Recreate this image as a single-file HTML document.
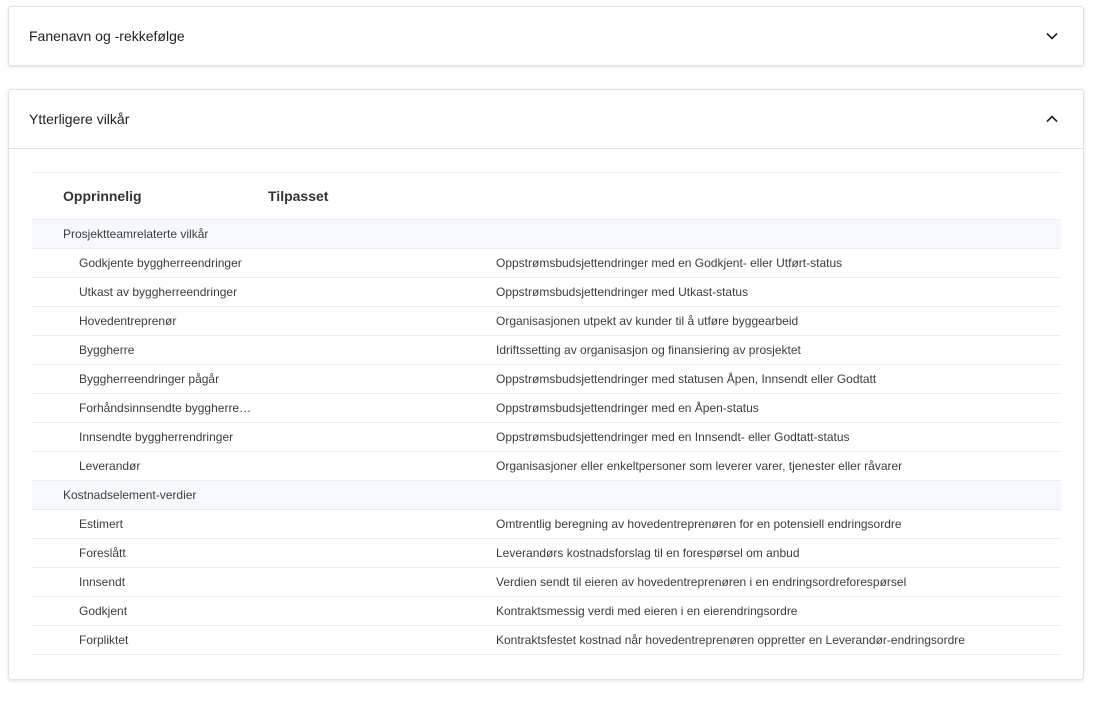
<!DOCTYPE html>
<html><head><meta charset="utf-8"><style>
*{box-sizing:border-box;margin:0;padding:0}
body{width:1093px;height:709px;background:#fff;font-family:"Liberation Sans",sans-serif;color:#3c3c3c;position:relative;overflow:hidden}
.card{position:absolute;left:8px;width:1076px;background:#fff;border:1px solid #e2e2e2;border-radius:3px;box-shadow:0 1px 3px rgba(0,0,0,.12)}
.hd{height:58px;display:flex;align-items:center;padding-left:20px;font-size:14px;color:#222;position:relative}
.chev{position:absolute;right:24px;top:24px}
table{position:absolute;left:23px;top:82px;width:1029px;border-collapse:collapse;font-size:12px}
td{height:29px;border-bottom:1px solid #ececec;vertical-align:middle;color:#3c3c3c}
tr.h td{height:47px;font-weight:bold;font-size:14px;color:#333;border-top:1px solid #ececec}
tr.g td{background:#f5f9fd}
</style></head><body>
<div class="card" style="top:6px;height:60px"><div class="hd">Fanenavn og -rekkefølge
<svg class="chev" width="14" height="10" viewBox="0 0 14 10"><path d="M2 2.5L7 7.5L12 2.5" fill="none" stroke="#222" stroke-width="1.6"/></svg></div></div>
<div class="card" style="top:89px;height:591px">
<div class="hd" style="height:59px;border-bottom:1px solid #e2e2e2">Ytterligere vilkår
<svg class="chev" width="14" height="10" viewBox="0 0 14 10"><path d="M2 7.5L7 2.5L12 7.5" fill="none" stroke="#222" stroke-width="1.6"/></svg></div>
<table>
<colgroup><col style="width:31px"><col style="width:433px"><col></colgroup>
<tr class="h"><td></td><td>Opprinnelig<span style="position:absolute;left:236px">Tilpasset</span></td><td></td></tr>
<tr class="g"><td colspan="3" style="padding-left:31px">Prosjektteamrelaterte vilkår</td></tr>
<tr><td></td><td style="padding-left:16px">Godkjente byggherreendringer</td><td>Oppstrømsbudsjettendringer med en Godkjent- eller Utført-status</td></tr>
<tr><td></td><td style="padding-left:16px">Utkast av byggherreendringer</td><td>Oppstrømsbudsjettendringer med Utkast-status</td></tr>
<tr><td></td><td style="padding-left:16px">Hovedentreprenør</td><td>Organisasjonen utpekt av kunder til å utføre byggearbeid</td></tr>
<tr><td></td><td style="padding-left:16px">Byggherre</td><td>Idriftssetting av organisasjon og finansiering av prosjektet</td></tr>
<tr><td></td><td style="padding-left:16px">Byggherreendringer pågår</td><td>Oppstrømsbudsjettendringer med statusen Åpen, Innsendt eller Godtatt</td></tr>
<tr><td></td><td style="padding-left:16px">Forhåndsinnsendte byggherre…</td><td>Oppstrømsbudsjettendringer med en Åpen-status</td></tr>
<tr><td></td><td style="padding-left:16px">Innsendte byggherrendringer</td><td>Oppstrømsbudsjettendringer med en Innsendt- eller Godtatt-status</td></tr>
<tr><td></td><td style="padding-left:16px">Leverandør</td><td>Organisasjoner eller enkeltpersoner som leverer varer, tjenester eller råvarer</td></tr>
<tr class="g"><td colspan="3" style="padding-left:31px">Kostnadselement-verdier</td></tr>
<tr><td></td><td style="padding-left:16px">Estimert</td><td>Omtrentlig beregning av hovedentreprenøren for en potensiell endringsordre</td></tr>
<tr><td></td><td style="padding-left:16px">Foreslått</td><td>Leverandørs kostnadsforslag til en forespørsel om anbud</td></tr>
<tr><td></td><td style="padding-left:16px">Innsendt</td><td>Verdien sendt til eieren av hovedentreprenøren i en endringsordreforespørsel</td></tr>
<tr><td></td><td style="padding-left:16px">Godkjent</td><td>Kontraktsmessig verdi med eieren i en eierendringsordre</td></tr>
<tr><td></td><td style="padding-left:16px">Forpliktet</td><td>Kontraktsfestet kostnad når hovedentreprenøren oppretter en Leverandør-endringsordre</td></tr>
</table>
</div>
</body></html>
